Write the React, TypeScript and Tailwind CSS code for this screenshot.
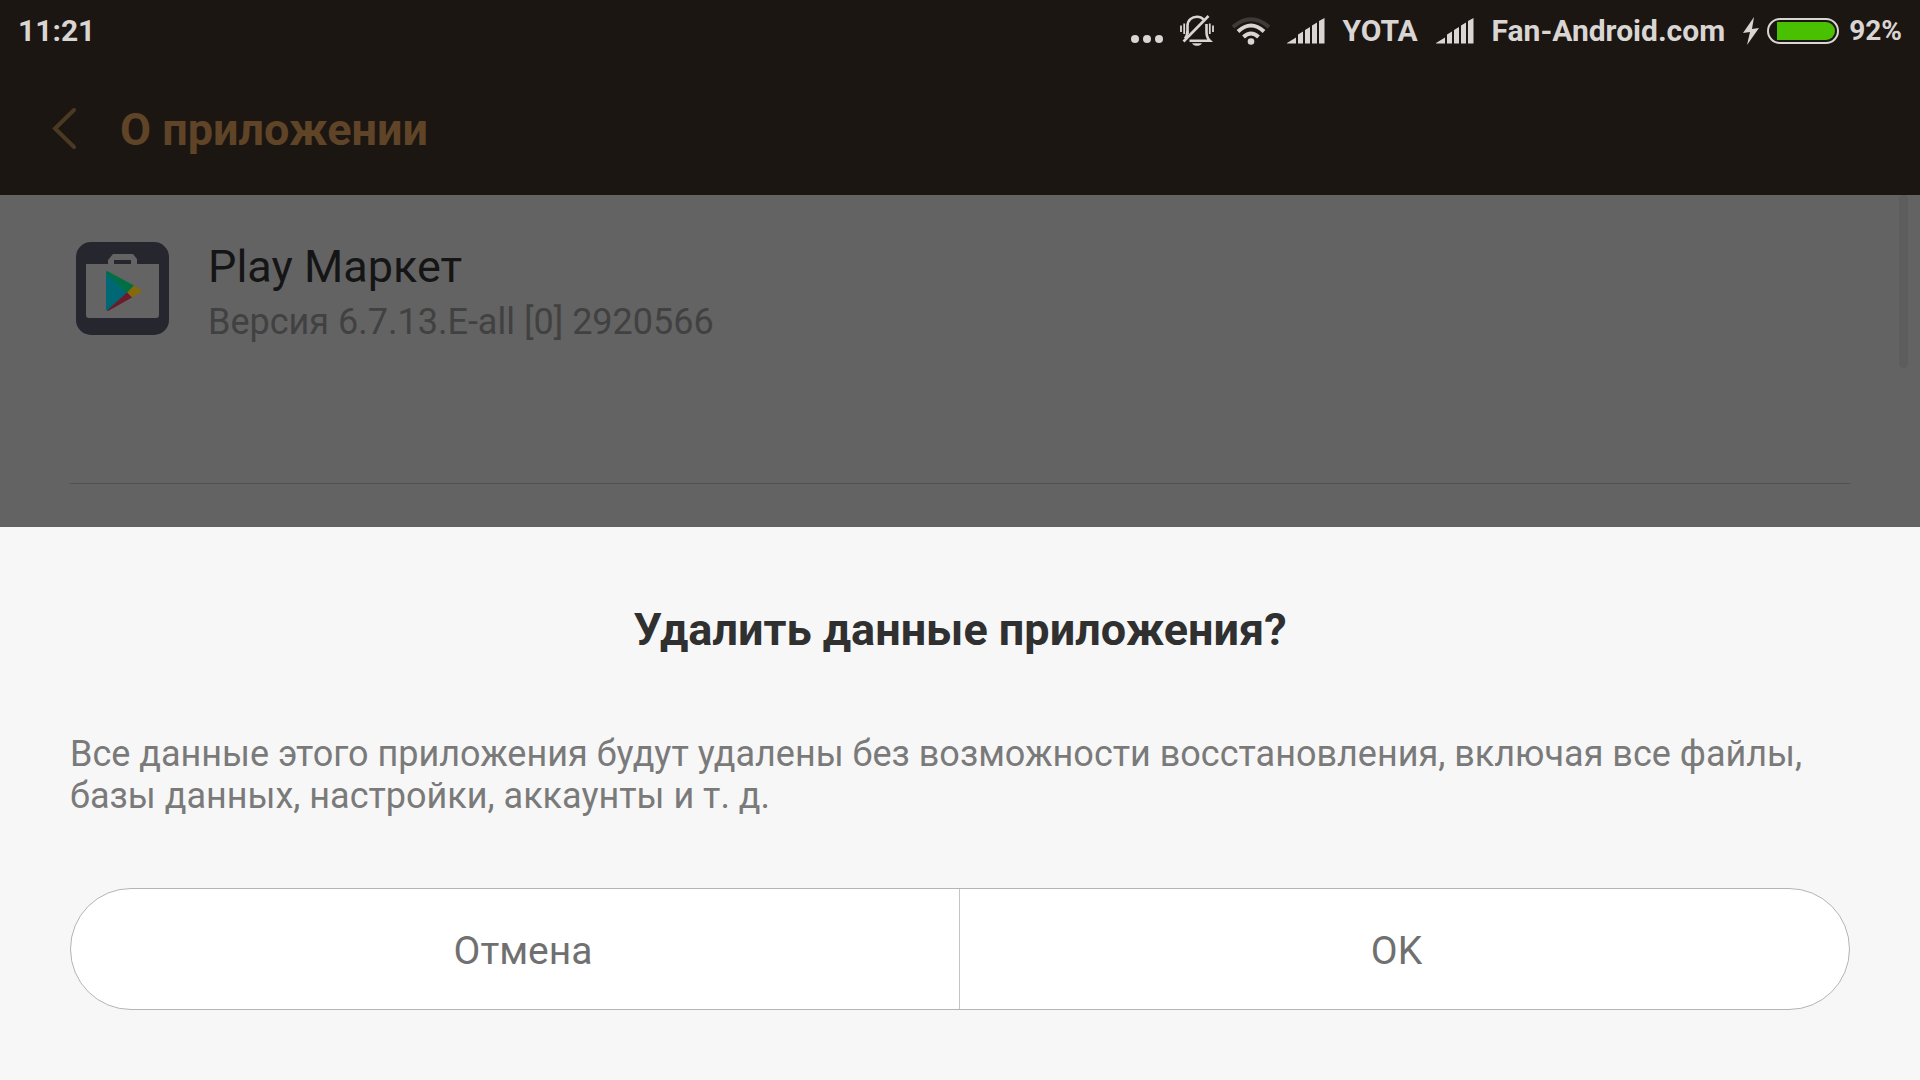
import React from "react";

function SilentBell() {
  return (
    <svg className="h-8 w-9" viewBox="0 0 36 32" fill="none" stroke="currentColor" strokeWidth="2.6" aria-hidden="true">
      <path d="M8.500 19V11C8.500 5 13 1.800 18 1.800c3 0 5 1 6.500 2.700" />
      <path d="M27.500 9v8c0 4 1 6.500 3.300 8.700H10.500" />
      <path d="M4.500 26.500 29.500 1" />
      <path d="M8.500 16c0 3-.6 5-2.500 7.500" />
      <path d="M13 28.200h10c-1.200 1.800-3 2.600-5 2.600s-3.800-.8-5-2.600Z" fill="currentColor" stroke="none" />
      <path d="M2 10.500v6.500M5.200 8.500v10.500M30.800 8.500v10.500M34 10.500v6.500" strokeWidth="1.800" />
    </svg>
  );
}

function Wifi() {
  return (
    <svg className="h-7 w-10" viewBox="0 0 40 28" fill="none" stroke="currentColor" aria-hidden="true">
      <path d="M2 10Q20-5.500 38 10" stroke="#3f3a36" strokeWidth="4" />
      <path d="M7 14.500Q20 2.500 33 14.500" strokeWidth="4" />
      <path d="M12.500 20Q20 13 27.500 20" strokeWidth="4" />
      <circle cx="20" cy="24.500" r="3.300" fill="currentColor" stroke="none" />
    </svg>
  );
}

function Signal() {
  return (
    <svg className="h-[26px] w-[38px]" viewBox="0 0 38 26" fill="currentColor" aria-hidden="true">
      <path d="M0 25 9 19.500V25.500H0ZM11 16.500 16 13.500V25.500H11ZM18 12 23 9V25.500H18ZM25 7.500 30 4.500V25.500H25ZM32 3 37.500 0V25.500H32Z" />
    </svg>
  );
}

function Battery() {
  return (
    <svg className="h-[26px] w-[72px]" viewBox="0 0 72 26" role="img" aria-label="Заряд батареи">
      <rect x="1" y="1" width="70" height="24" rx="12" fill="none" stroke="#d9d5d2" strokeWidth="2" />
      <path d="M10 4H59a9 9 0 0 1 0 18H10Z" fill="#49c000" />
    </svg>
  );
}

function PlayStoreIcon() {
  return (
    <svg className="size-[93px] shrink-0" viewBox="0 0 93 93" aria-hidden="true">
      <rect width="93" height="93" rx="15" fill="#26262f" />
      <path d="M10 22H32V18L37 12H57L61 17V22H83V73a3 3 0 0 1-3 3H13a3 3 0 0 1-3-3Z" fill="#646464" />
      <path d="M38 18H55V22H38Z" fill="#26262f" />
      <path d="M30 31V67Q30 69 32 68.500L52 50 33 30Q30 28 30 31Z" fill="#006774" />
      <path d="M30 31Q30 28 33 30L58 43.500 51 51 30 31Z" fill="#006f43" />
      <path d="M58 43.500 64 47Q67 49 64 51L56 55.500 51 50.500Z" fill="#86690c" />
      <path d="M51 50.500 56 55.500 33 68.500Q31 69 31 68.500Z" fill="#6c1b2b" />
    </svg>
  );
}

export default function App() {
  return (
    <div className="flex min-h-screen flex-col bg-[#636363] font-['Roboto',sans-serif]">
      <header className="bg-[#1c1612]">
        <div className="flex h-[62px] items-center justify-between px-[18px] text-[30px] leading-9 font-bold text-[#d9d5d2]">
          <time>11:21</time>
          <div className="flex items-center">
            <svg className="mt-4 mr-4 h-2 w-8" viewBox="0 0 32 8" fill="currentColor" aria-hidden="true">
              <circle cx="4" cy="4" r="4" />
              <circle cx="16" cy="4" r="4" />
              <circle cx="28" cy="4" r="4" />
            </svg>
            <SilentBell />
            <span className="ml-4 flex"><Wifi /></span>
            <span className="ml-4 flex"><Signal /></span>
            <span className="ml-[18px]">YOTA</span>
            <span className="ml-[18px] flex"><Signal /></span>
            <span className="ml-[18px]">Fan-Android.com</span>
            <svg className="ml-[18px] h-7 w-4" viewBox="0 0 16 28" fill="currentColor" aria-hidden="true">
              <path d="M11 0 0 16 7 15 4 28 16 11 9 12Z" />
            </svg>
            <span className="ml-2 flex"><Battery /></span>
            <span className="ml-[10px] text-[28px]">92%</span>
          </div>
        </div>
        <div className="flex h-[133px] items-center pl-[52px] text-[45px] leading-[54px] font-bold text-[#5f4427]">
          <button type="button" aria-label="Назад" className="flex">
            <svg className="h-[42px] w-6" viewBox="0 0 24 42" fill="none" stroke="#4a3923" strokeWidth="4" strokeLinecap="round" aria-hidden="true">
              <path d="M22 2 3 20.500 22 39" />
            </svg>
          </button>
          <h1 className="ml-11 pt-0.5">О приложении</h1>
        </div>
      </header>

      <main className="relative flex-1">
        <section className="mx-[70px] flex h-[289px] items-start border-b border-[#505050] pt-[42px] pl-1.5">
          <div className="flex items-center gap-[39px]">
            <PlayStoreIcon />
            <div>
              <h2 className="text-[45px] leading-[60px] text-[#151515]">Play Маркет</h2>
              <p className="mt-[7px] text-[36px] leading-9 text-[#414141]">Версия 6.7.13.E-all [0] 2920566</p>
            </div>
          </div>
        </section>
        <div className="absolute top-0 right-3 h-[173px] w-[9px] rounded-full bg-[#5d5d5d]" />
      </main>

      <section role="dialog" aria-labelledby="dialog-title" className="bg-[#f7f7f7] px-[70px] pt-[76px] pb-[70px]">
        <h2 id="dialog-title" className="text-center text-[45px] leading-[54px] font-bold text-[#303030]">
          Удалить данные приложения?
        </h2>
        <p className="mt-[76px] text-[36px] leading-[42px] text-[#7a7a7a]">
          Все данные этого приложения будут удалены без возможности восстановления, включая все файлы, базы данных, настройки, аккаунты и т. д.
        </p>
        <div className="mt-[71px] grid h-[122px] grid-cols-2 divide-x divide-[#c4c4c4] overflow-hidden rounded-full border border-[#b4b4b4] bg-white text-[39px] text-[#707070]">
          <button type="button" className="pt-1 pl-4">Отмена</button>
          <button type="button" className="pt-1 pr-4">OK</button>
        </div>
      </section>
    </div>
  );
}
